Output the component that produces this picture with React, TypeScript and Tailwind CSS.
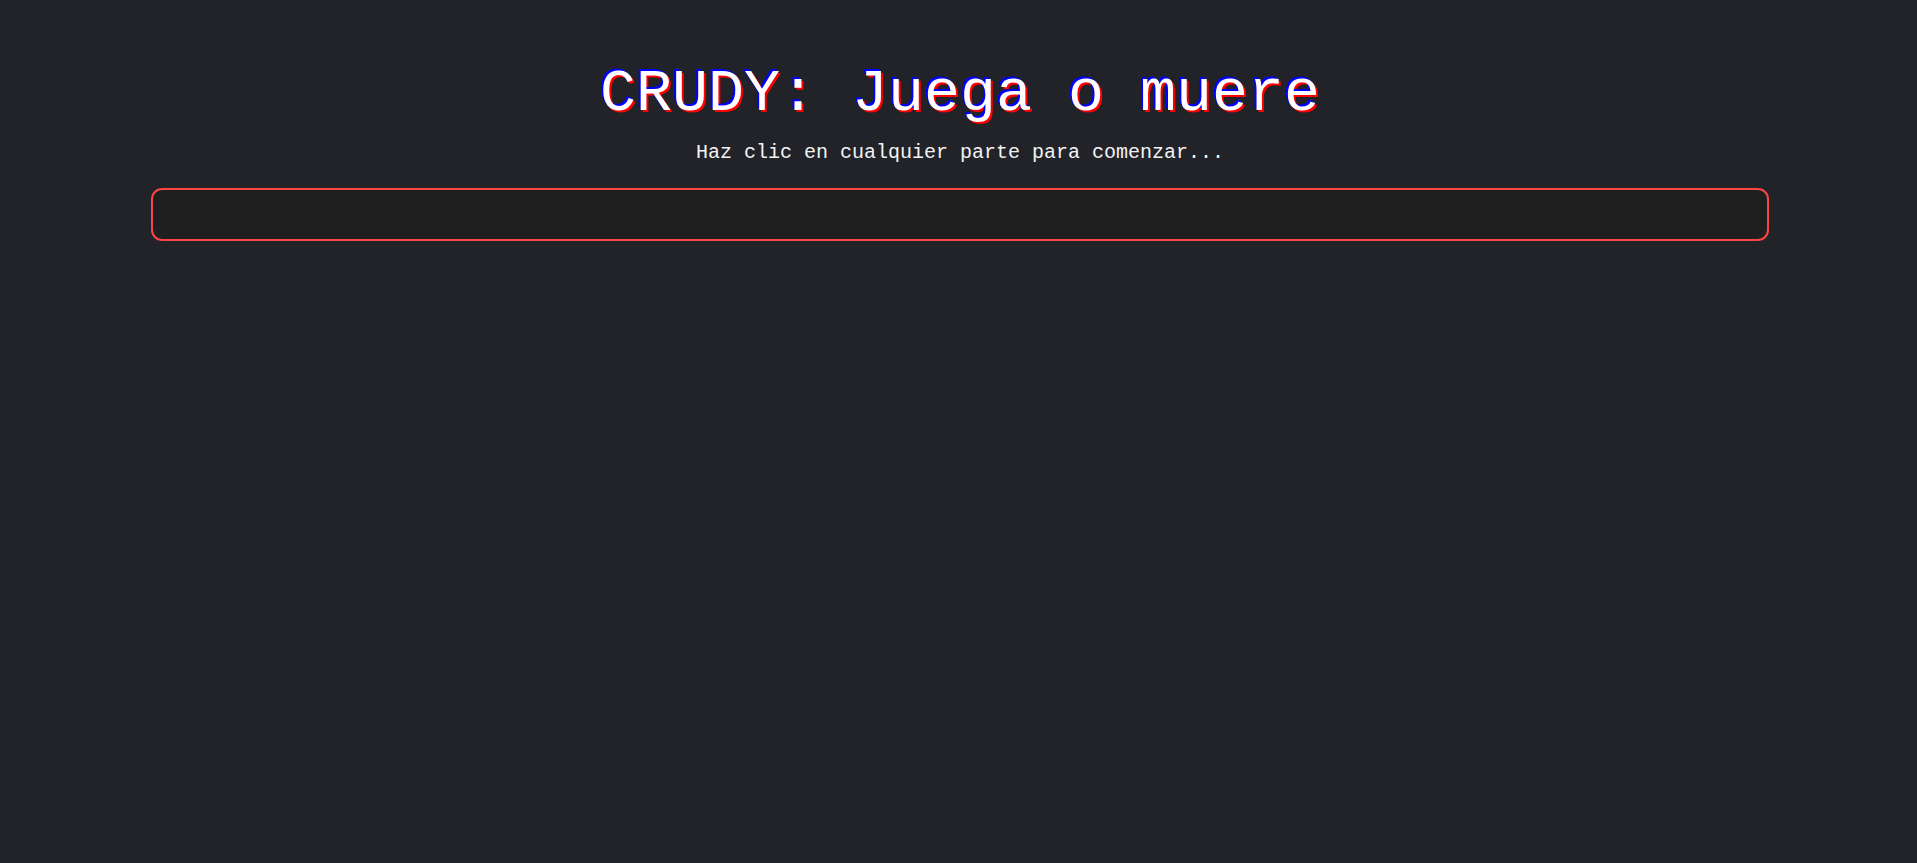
export default function App() {
  return (
    <div className="min-h-screen bg-[#212329] font-['Liberation_Mono','Courier_New',monospace] text-[#f2f2f2]">
      <div className="mx-auto flex w-full flex-col items-center pl-[151px] pr-[148px] pt-[61px]">
        <h1 className="text-[60px] leading-[1.1] text-white [text-shadow:-2px_-2px_0_#0000ff,2px_2px_0_#ff0000]">
          CRUDY: Juega o muere
        </h1>
        <p className="mt-[14px] text-[20px] leading-[1.2]">
          Haz clic en cualquier parte para comenzar...
        </p>
        <div className="mt-[23px] h-[53px] w-full rounded-[11px] border-2 border-[#ff4444] bg-[#1f1f1f]" />
      </div>
    </div>
  );
}
